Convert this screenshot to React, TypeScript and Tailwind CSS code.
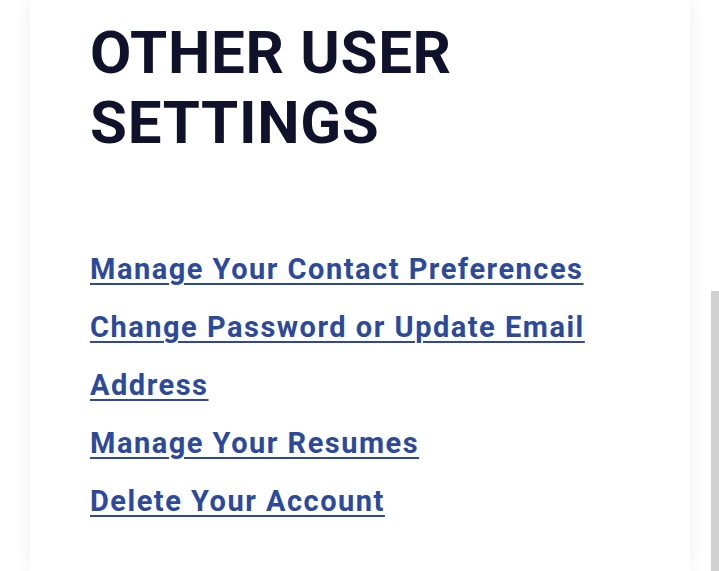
const links = [
  "Manage Your Contact Preferences",
  "Change Password or Update Email Address",
  "Manage Your Resumes",
  "Delete Your Account",
];

export default function App() {
  return (
    <div
      className="relative h-[571px] w-full overflow-hidden bg-white"
      style={{ fontFamily: "Roboto, 'Liberation Sans', sans-serif" }}
    >
      <div className="ml-[30px] h-full w-[660px] bg-white px-[60px] pt-[18px] shadow-[0_0_18px_rgba(0,0,0,0.07)]">
        <h1 className="text-[60px] font-bold uppercase leading-[70px] tracking-[0.7px] text-[#10112a]">
          Other User Settings
        </h1>
        <ul className="mt-[82px]">
          {links.map((l) => (
            <li key={l}>
              <a
                href="#"
                className="text-[29px] font-bold leading-[58px] tracking-[1.5px] text-[#2d4a9a] underline decoration-2 underline-offset-[4px]"
              >
                {l}
              </a>
            </li>
          ))}
        </ul>
      </div>
      {/* scrollbar thumb */}
      <div className="absolute right-0 top-[291px] h-[300px] w-[8px] bg-[#d1d1d1]" />
    </div>
  );
}
